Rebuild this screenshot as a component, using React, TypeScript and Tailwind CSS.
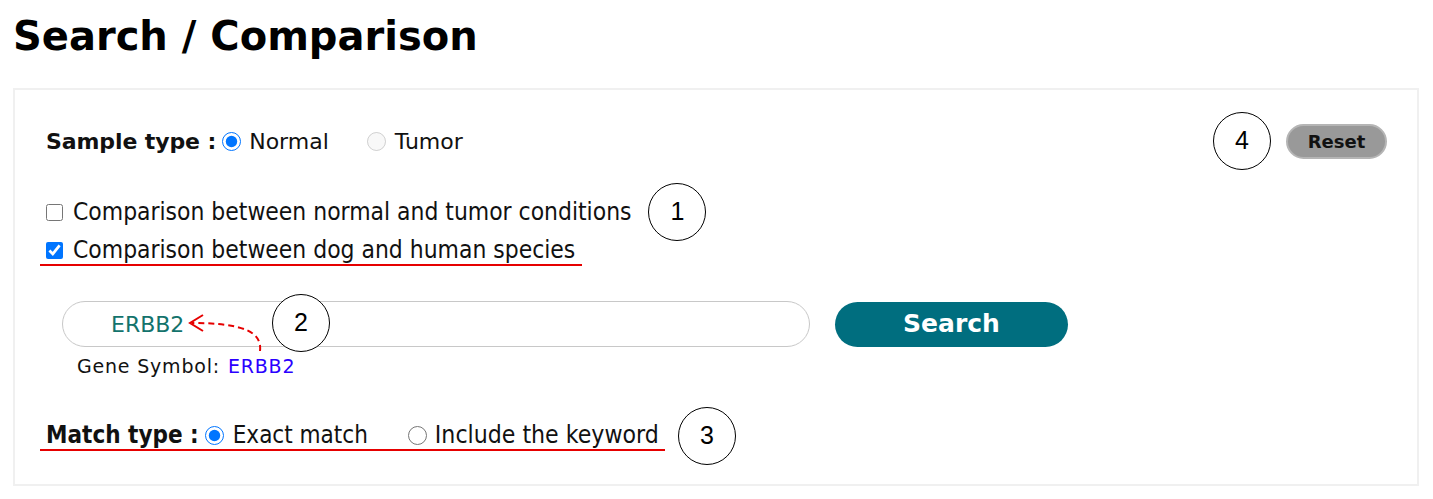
import React from 'react';

function Marker({ n }: { n: number }) {
  return (
    <div className="w-[58px] h-[58px] shrink-0 rounded-full border-[1.5px] border-black bg-white flex items-center justify-center font-['Liberation_Sans',sans-serif] text-[25px] text-black">
      {n}
    </div>
  );
}

const narrow = "font-['DejaVu_Sans_Condensed','DejaVu_Sans',sans-serif]";

export default function App() {
  return (
    <div className="w-[1433px] h-[499px] bg-white font-['DejaVu_Sans',Verdana,sans-serif] text-[#111]">
      <h1 className="pl-[13px] pt-[11px] text-[40px] leading-[50px] font-bold text-black">Search / Comparison</h1>

      <div className="mt-[27px] ml-[13px] w-[1406px] h-[398px] border-2 border-[#f0f0f0] pl-[31px] pr-[30px] pt-[22px]">
        {/* Sample type */}
        <div className="h-[58px] flex items-center justify-between">
          <div className="flex items-center text-[22px]">
            <span className="font-bold tracking-[-0.1px]">Sample type :</span>
            <input type="radio" name="sample" defaultChecked className="ml-[6px] w-[19px] h-[19px] accent-[#0075ff]" />
            <span className="ml-[8px]">Normal</span>
            <input type="radio" name="sample" disabled className="ml-[38px] w-[19px] h-[19px]" />
            <span className="ml-[9px]">Tumor</span>
          </div>
          <div className="flex items-center gap-[15px]">
            <Marker n={4} />
            <button className="w-[101px] h-[35px] rounded-full bg-[#999999] border-2 border-[#b5b5b5] text-[18px] font-bold text-[#111]">Reset</button>
          </div>
        </div>

        {/* comparison options */}
        <div className={`mt-[27px] h-[30px] flex items-center text-[24.4px] ${narrow}`}>
          <input type="checkbox" className="w-[17px] h-[17px]" />
          <span className="ml-[10px]">Comparison between normal and tumor conditions</span>
          <div className="ml-[17px]"><Marker n={1} /></div>
        </div>
        <div className={`mt-[9px] -ml-[6px] pl-[6px] w-[542px] h-[30px] flex items-center text-[24.4px] border-b-2 border-[#e60000] ${narrow}`}>
          <input type="checkbox" defaultChecked className="w-[17px] h-[17px] accent-[#0075ff]" />
          <span className="ml-[10px]">Comparison between dog and human species</span>
        </div>

        {/* search box */}
        <div className="relative mt-[35px] flex items-center">
          <div className="ml-[16px] w-[748px] h-[46px] rounded-full border-[1.5px] border-[#c8c8c8] flex items-center pl-[48px] text-[22px] text-[#13736c]">
            ERBB2
          </div>
          <button className="ml-[25px] w-[233px] h-[45px] rounded-full bg-[#006e7f] text-white text-[25px] font-bold">Search</button>
          <div className="absolute left-[226px] top-[-7px]"><Marker n={2} /></div>
          <svg className="absolute left-[130px] top-[10px]" width="90" height="42" viewBox="0 0 90 42" fill="none">
            <path d="M84 40 C86 22 70 12 16 12" stroke="#e60000" strokeWidth="2" strokeDasharray="6 4" />
            <path d="M27 4 L14 12 L27 20" stroke="#e60000" strokeWidth="2" />
          </svg>
        </div>
        <div className="mt-[9px] ml-[31px] h-[20px] flex items-center text-[19px] tracking-[0.8px]">
          <span>Gene Symbol:</span>
          <span className="ml-[8px] text-[#2a00ff]">ERBB2</span>
        </div>

        {/* match type */}
        <div className={`mt-[45px] h-[30px] flex items-center ${narrow}`}>
          <div className="-ml-[6px] pl-[6px] w-[625px] h-[30px] flex items-center text-[24px] border-b-2 border-[#e60000]">
            <span className="font-bold">Match type :</span>
            <input type="radio" name="match" defaultChecked className="ml-[6px] w-[19px] h-[19px] accent-[#0075ff]" />
            <span className="ml-[9px]">Exact match</span>
            <input type="radio" name="match" className="ml-[40px] w-[19px] h-[19px]" />
            <span className="ml-[8px] text-[24.6px]">Include the keyword</span>
          </div>
          <div className="ml-[13px]"><Marker n={3} /></div>
        </div>
      </div>
    </div>
  );
}
